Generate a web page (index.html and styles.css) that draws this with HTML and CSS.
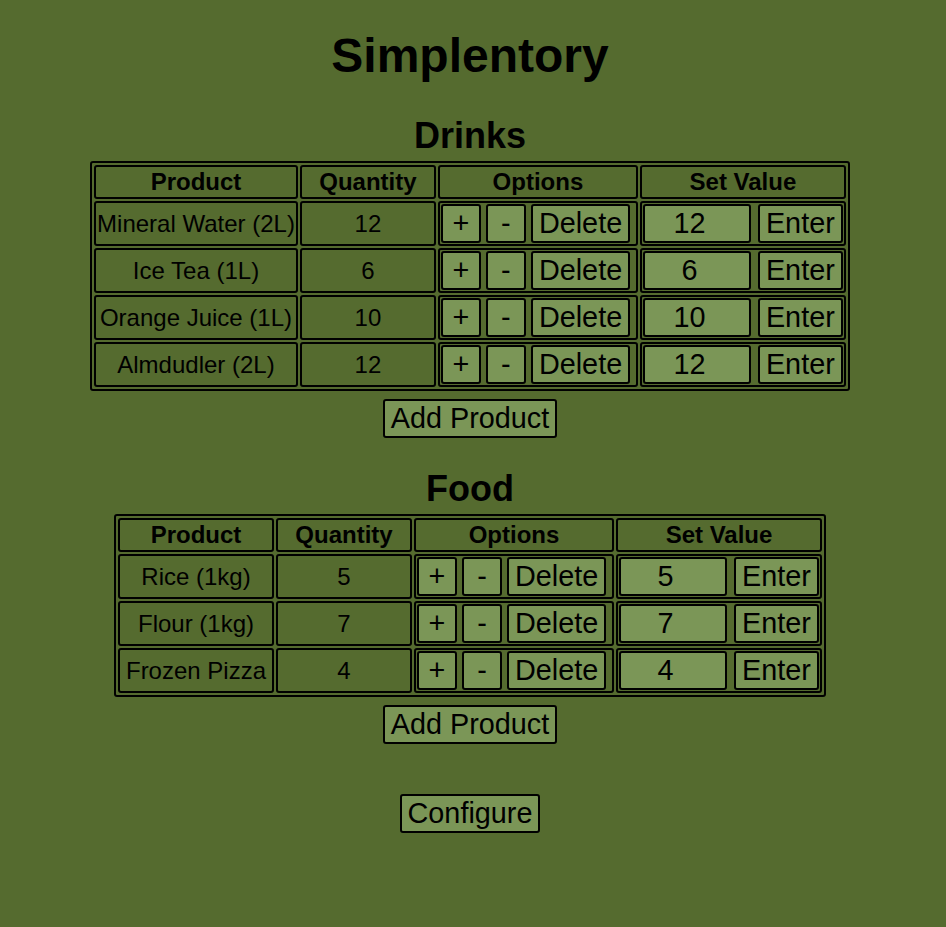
FILE: index.html
```html
<!DOCTYPE html>
<html lang="en">
<head>
    <meta charset="UTF-8">
    <meta name="viewport" content="width=device-width, initial-scale=1.0">
    <title>Simplentory</title>
    <link rel="stylesheet" href="styles.css">
</head>
<body>
    <h1 class="app-title">Simplentory</h1>

    <section class="category">
        <h2 class="category-title">Drinks</h2>
        <table class="stock-table">
            <tr>
                <th class="col-product">Product</th>
                <th class="col-qty">Quantity</th>
                <th class="col-options">Options</th>
                <th class="col-set">Set Value</th>
            </tr>
            <tr>
                <td>Mineral Water (2L)</td>
                <td>12</td>
                <td><div class="options"><button class="btn btn-step">+</button><button class="btn btn-step">-</button><button class="btn">Delete</button></div></td>
                <td><div class="set-value"><input class="value-input" type="number" value="12"><button class="btn">Enter</button></div></td>
            </tr>
            <tr>
                <td>Ice Tea (1L)</td>
                <td>6</td>
                <td><div class="options"><button class="btn btn-step">+</button><button class="btn btn-step">-</button><button class="btn">Delete</button></div></td>
                <td><div class="set-value"><input class="value-input" type="number" value="6"><button class="btn">Enter</button></div></td>
            </tr>
            <tr>
                <td>Orange Juice (1L)</td>
                <td>10</td>
                <td><div class="options"><button class="btn btn-step">+</button><button class="btn btn-step">-</button><button class="btn">Delete</button></div></td>
                <td><div class="set-value"><input class="value-input" type="number" value="10"><button class="btn">Enter</button></div></td>
            </tr>
            <tr>
                <td>Almdudler (2L)</td>
                <td>12</td>
                <td><div class="options"><button class="btn btn-step">+</button><button class="btn btn-step">-</button><button class="btn">Delete</button></div></td>
                <td><div class="set-value"><input class="value-input" type="number" value="12"><button class="btn">Enter</button></div></td>
            </tr>
        </table>
        <button class="btn btn-add">Add Product</button>
    </section>

    <section class="category">
        <h2 class="category-title">Food</h2>
        <table class="stock-table">
            <tr>
                <th class="col-product">Product</th>
                <th class="col-qty">Quantity</th>
                <th class="col-options">Options</th>
                <th class="col-set">Set Value</th>
            </tr>
            <tr>
                <td>Rice (1kg)</td>
                <td>5</td>
                <td><div class="options"><button class="btn btn-step">+</button><button class="btn btn-step">-</button><button class="btn">Delete</button></div></td>
                <td><div class="set-value"><input class="value-input" type="number" value="5"><button class="btn">Enter</button></div></td>
            </tr>
            <tr>
                <td>Flour (1kg)</td>
                <td>7</td>
                <td><div class="options"><button class="btn btn-step">+</button><button class="btn btn-step">-</button><button class="btn">Delete</button></div></td>
                <td><div class="set-value"><input class="value-input" type="number" value="7"><button class="btn">Enter</button></div></td>
            </tr>
            <tr>
                <td>Frozen Pizza</td>
                <td>4</td>
                <td><div class="options"><button class="btn btn-step">+</button><button class="btn btn-step">-</button><button class="btn">Delete</button></div></td>
                <td><div class="set-value"><input class="value-input" type="number" value="4"><button class="btn">Enter</button></div></td>
            </tr>
        </table>
        <button class="btn btn-add">Add Product</button>
    </section>

    <button class="btn btn-configure">Configure</button>
</body>
</html>
```

FILE: styles.css
```css
/* Simplentory - olive theme */
body {
    margin: 0 14px 0 8px;
    background-color: #556b2f;
    color: #000;
    font-family: 'Liberation Sans', Arial, sans-serif;
    font-size: 24px;
    text-align: center;
}

.app-title {
    font-size: 48px;
    margin: 28px 0 32px;
}

.category-title {
    font-size: 36px;
    margin: 30px 0 4px;
}

.stock-table {
    margin: 0 auto;
    border: 2px solid #000;
    border-radius: 3px;
    border-spacing: 2px;
}

.stock-table th,
.stock-table td {
    border: 2px solid #000;
    border-radius: 3px;
    padding: 1px;
    text-align: center;
    vertical-align: middle;
    white-space: nowrap;
}

.stock-table th {
    font-weight: bold;
}

.col-product {
    width: 150px;
}

.col-qty {
    width: 130px;
}

.col-options {
    width: 194px;
}

.col-set {
    width: 200px;
}

.options {
    display: flex;
    gap: 5px;
}

.set-value {
    display: flex;
    gap: 7px;
}

.btn {
    font-family: 'Liberation Sans', Arial, sans-serif;
    font-size: 28.8px;
    color: #000;
    background-color: #7b9657;
    border: 2px solid #000;
    border-radius: 3px;
    padding: 1px 6px;
    margin: 0;
}

.btn-step {
    width: 40px;
}

.value-input {
    width: 100px;
    font-family: 'Liberation Sans', Arial, sans-serif;
    font-size: 28.8px;
    color: #000;
    background-color: #7b9657;
    border: 2px solid #000;
    border-radius: 3px;
    padding: 1px 2px;
    margin: 0;
    text-align: center;
}

.btn-add {
    display: block;
    margin: 8px auto 0;
}

.btn-configure {
    display: block;
    margin: 50px auto 0;
}
```
